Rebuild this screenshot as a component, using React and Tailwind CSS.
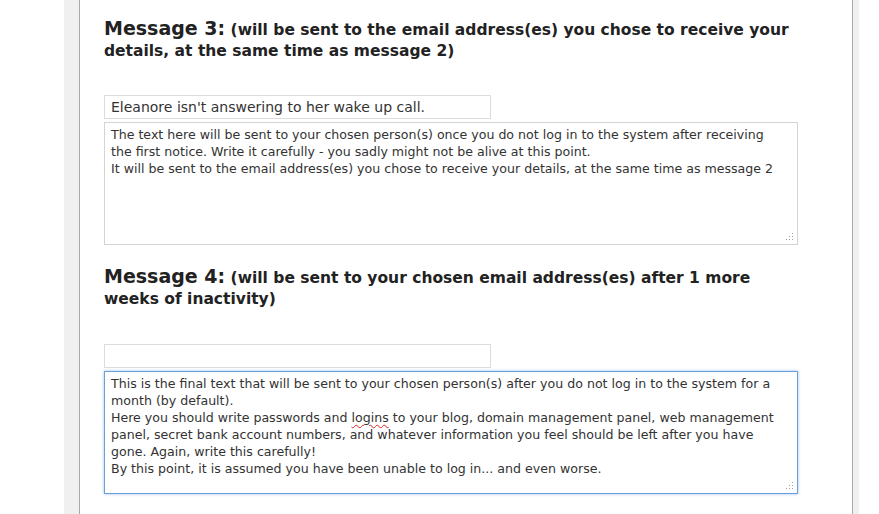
import React from "react";

const font = { fontFamily: '"DejaVu Sans", Verdana, sans-serif' };

function Heading({ num, note }) {
  return (
    <h2 className="w-[694px] text-[15.5px] font-bold leading-[21px] text-[#222]">
      <span className="text-[19px]">Message {num}:</span> {note}
    </h2>
  );
}

function Grip() {
  return (
    <svg width="8" height="8" viewBox="0 0 8 8" className="absolute bottom-[3px] right-[3px]">
      <g fill="#a0a0a0">
        <rect x="6" y="0" width="1" height="1" />
        <rect x="3" y="3" width="1" height="1" />
        <rect x="6" y="3" width="1" height="1" />
        <rect x="0" y="6" width="1" height="1" />
        <rect x="3" y="6" width="1" height="1" />
        <rect x="6" y="6" width="1" height="1" />
      </g>
    </svg>
  );
}

export default function App() {
  return (
    <div className="flex w-full h-[514px] bg-white overflow-hidden" style={font}>
      <div className="w-[64px] shrink-0" />
      <div className="w-[16px] shrink-0 bg-[#f0f0f0] border-r border-[#a9a9a9]" />
      <div className="w-[772px] shrink-0 pl-[24px] pt-[18px]">
        <Heading
          num="3"
          note="(will be sent to the email address(es) you chose to receive your details, at the same time as message 2)"
        />
        <div className="mt-[33px] w-[387px] h-[24px] border border-[#dcdcdc] px-[6px] text-[14px] leading-[22px] text-[#333]">
          Eleanore isn't answering to her wake up call.
        </div>
        <div className="relative mt-[3px] w-[694px] h-[123px] border border-[#d4d4d4] pl-[6px] pr-[18px] pt-[3px] text-[12.6px] leading-[17px] text-[#333]">
          The text here will be sent to your chosen person(s) once you do not log in to the system after receiving the first notice. Write it carefully - you sadly might not be alive at this point.
          <br />
          It will be sent to the email address(es) you chose to receive your details, at the same time as message 2
          <Grip />
        </div>
        <div className="mt-[21px]">
          <Heading
            num="4"
            note="(will be sent to your chosen email address(es) after 1 more weeks of inactivity)"
          />
        </div>
        <div className="mt-[34px] w-[387px] h-[24px] border border-[#dcdcdc]" />
        <div className="relative mt-[3px] w-[694px] h-[123px] border border-[#6b9fd6] shadow-[0_0_3px_#9cc3ec] pl-[6px] pr-[18px] pt-[3px] text-[12.6px] leading-[17px] text-[#333]">
          This is the final text that will be sent to your chosen person(s) after you do not log in to the system for a month (by default).
          <br />
          Here you should write passwords and{" "}
          <span className="underline decoration-wavy decoration-[#e02020] decoration-1 underline-offset-2">logins</span>{" "}
          to your blog, domain management panel, web management panel, secret bank account numbers, and whatever information you feel should be left after you have gone. Again, write this carefully!
          <br />
          By this point, it is assumed you have been unable to log in... and even worse.
          <Grip />
        </div>
      </div>
      <div className="w-[7px] shrink-0 bg-[#f0f0f0] border-l border-[#a9a9a9]" />
      <div className="flex-1" />
    </div>
  );
}
